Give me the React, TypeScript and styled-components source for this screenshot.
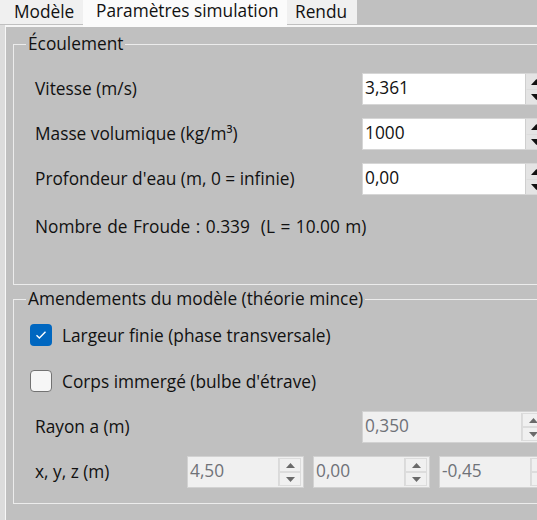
import React from 'react';
import styled, { createGlobalStyle } from 'styled-components';

const GlobalStyle = createGlobalStyle`
    html, body {
        margin: 0;
        padding: 0;
        overflow: hidden;
        background: #c0c0c0;
    }
    body {
        font-family: "Segoe UI", "Open Sans", "Noto Sans", sans-serif;
        font-size: 17.3px;
        color: #111;
    }
`;

const Window = styled.div`
    width: 580px;
    height: 520px;
    background: #c0c0c0;
    display: flex;
    flex-direction: column;
`;

const TabStrip = styled.div`
    display: flex;
    align-items: flex-start;
    height: 25px;
    position: relative;
    z-index: 1;
`;

const Tab = styled.div<{ $active?: boolean; $width: number; $pad: number }>`
    box-sizing: border-box;
    width: ${(p) => p.$width}px;
    height: ${(p) => (p.$active ? 27 : 24)}px;
    padding-left: ${(p) => p.$pad}px;
    line-height: ${(p) => (p.$active ? 21 : 23)}px;
    background: ${(p) => (p.$active ? '#fbfbfb' : '#f0f0f0')};
    white-space: nowrap;
`;

const PageArea = styled.div`
    flex: 1;
    display: flex;
    background: #dcdcdc;
    padding-left: 5px;
`;

const Page = styled.div`
    flex: 1;
    background: #c0c0c0;
    border-top: 2px solid #f7f7f7;
    border-left: 1px solid #f7f7f7;
    padding: 6px 0 0 7px;
    display: flex;
    flex-direction: column;
    gap: 3px;
`;

const GroupBox = styled.fieldset`
    margin: 0;
    padding: 0;
    border: 1px solid #ececec;
    min-width: 0;
`;

const Legend = styled.legend`
    margin-left: 12px;
    padding: 0 2px;
    line-height: 22px;
`;

const GroupBody = styled.div<{ $top: number; $bottom: number }>`
    padding: ${(p) => p.$top}px 0 ${(p) => p.$bottom}px 21px;
    display: flex;
    flex-direction: column;
`;

const FieldRow = styled.div<{ $gap?: number }>`
    display: flex;
    align-items: center;
    height: 32px;
    margin-top: ${(p) => p.$gap ?? 0}px;
`;

const FieldLabel = styled.div<{ $width: number }>`
    width: ${(p) => p.$width}px;
    flex-shrink: 0;
    line-height: 22px;
    margin-top: -1px;
    white-space: nowrap;
`;

const Info = styled.div`
    margin-top: 21px;
    line-height: 22px;
    white-space: nowrap;
    word-spacing: 1px;
`;

const CheckRow = styled.label<{ $gap?: number }>`
    display: flex;
    align-items: center;
    gap: 10px;
    height: 24px;
    margin-left: -5px;
    margin-top: ${(p) => p.$gap ?? 0}px;
    white-space: nowrap;
`;

const CheckBox = styled.span<{ $checked?: boolean }>`
    box-sizing: border-box;
    width: 22px;
    height: 22px;
    border-radius: 4px;
    display: flex;
    align-items: center;
    justify-content: center;
    background: ${(p) => (p.$checked ? '#0067c0' : '#f6f6f6')};
    border: ${(p) => (p.$checked ? 'none' : '1.5px solid #727272')};
`;

const NumBox = styled.div<{ $width: number; $disabled?: boolean }>`
    box-sizing: border-box;
    display: flex;
    width: ${(p) => p.$width}px;
    height: 32px;
    flex-shrink: 0;
    border: 1px solid ${(p) => (p.$disabled ? '#d2d2d2' : '#d6d6d6')};
    background: ${(p) => (p.$disabled ? '#f0f0f0' : '#ffffff')};
`;

const NumText = styled.span<{ $disabled?: boolean }>`
    flex: 1;
    padding-left: 2px;
    line-height: 28px;
    color: ${(p) => (p.$disabled ? '#6f7278' : '#111')};
`;

const Spinner = styled.div<{ $disabled?: boolean }>`
    width: ${(p) => (p.$disabled ? 22 : 20)}px;
    display: flex;
    flex-direction: column;
    margin: ${(p) => (p.$disabled ? '1px 2px 1px 0' : '0 0 0 2px')};
    background: ${(p) => (p.$disabled ? '#f0f0f0' : '#e4e4e4')};
    border-left: 1px solid ${(p) => (p.$disabled ? '#dadada' : '#cfcfcf')};
`;

const SpinButton = styled.div<{ $disabled?: boolean }>`
    flex: 1;
    display: flex;
    align-items: center;
    justify-content: center;
    border: 1px solid ${(p) => (p.$disabled ? '#dcdcdc' : 'transparent')};
    & + & {
        border-top-color: ${(p) => (p.$disabled ? '#dcdcdc' : '#d0d0d0')};
    }
`;

const Arrow = ({ up, disabled }: { up?: boolean; disabled?: boolean }) => {
    const w = disabled ? 9 : 11;
    const h = disabled ? 5 : 6;
    const points = up ? `0,${h} ${w / 2},0 ${w},${h}` : `0,0 ${w / 2},${h} ${w},0`;
    return (
        <svg width={w} height={h} viewBox={`0 0 ${w} ${h}`}>
            <polygon points={points} fill={disabled ? '#6a6a6a' : '#111'} />
        </svg>
    );
};

const Numeric = ({ value, width, disabled }: { value: string; width: number; disabled?: boolean }) => (
    <NumBox $width={width} $disabled={disabled}>
        <NumText $disabled={disabled}>{value}</NumText>
        <Spinner $disabled={disabled}>
            <SpinButton $disabled={disabled}>
                <Arrow up disabled={disabled} />
            </SpinButton>
            <SpinButton $disabled={disabled}>
                <Arrow disabled={disabled} />
            </SpinButton>
        </Spinner>
    </NumBox>
);

const Coords = styled.div`
    display: flex;
    gap: 9px;
`;

const Check = () => (
    <svg width="12" height="10" viewBox="0 0 12 10">
        <path d="M1.5 5.2 L4.4 8 L10.5 1.8" fill="none" stroke="#fff" strokeWidth="1.4" />
    </svg>
);

const App: React.FC = () => {
    return (
        <>
            <GlobalStyle />
            <Window>
                <TabStrip>
                    <Tab $width={83} $pad={14}>Modèle</Tab>
                    <Tab $active $width={204} $pad={13}>Paramètres simulation</Tab>
                    <Tab $width={70} $pad={8}>Rendu</Tab>
                </TabStrip>
                <PageArea>
                    <Page>
                        <GroupBox>
                            <Legend>Écoulement</Legend>
                            <GroupBody $top={18} $bottom={46}>
                                <FieldRow>
                                    <FieldLabel $width={327}>Vitesse (m/s)</FieldLabel>
                                    <Numeric value="3,361" width={185} />
                                </FieldRow>
                                <FieldRow $gap={13}>
                                    <FieldLabel $width={327}>Masse volumique (kg/m³)</FieldLabel>
                                    <Numeric value="1000" width={185} />
                                </FieldRow>
                                <FieldRow $gap={13}>
                                    <FieldLabel $width={327}>Profondeur d'eau (m, 0 = infinie)</FieldLabel>
                                    <Numeric value="0,00" width={185} />
                                </FieldRow>
                                <Info>Nombre de Froude : 0.339&nbsp;&nbsp;(L = 10.00 m)</Info>
                            </GroupBody>
                        </GroupBox>
                        <GroupBox>
                            <Legend>Amendements du modèle (théorie mince)</Legend>
                            <GroupBody $top={13} $bottom={15}>
                                <CheckRow>
                                    <CheckBox $checked>
                                        <Check />
                                    </CheckBox>
                                    Largeur finie (phase transversale)
                                </CheckRow>
                                <CheckRow $gap={22}>
                                    <CheckBox />
                                    Corps immergé (bulbe d'étrave)
                                </CheckRow>
                                <FieldRow $gap={18}>
                                    <FieldLabel $width={327}>Rayon a (m)</FieldLabel>
                                    <Numeric value="0,350" width={185} disabled />
                                </FieldRow>
                                <FieldRow $gap={13}>
                                    <FieldLabel $width={152}>x, y, z (m)</FieldLabel>
                                    <Coords>
                                        <Numeric value="4,50" width={117} disabled />
                                        <Numeric value="0,00" width={117} disabled />
                                        <Numeric value="-0,45" width={117} disabled />
                                    </Coords>
                                </FieldRow>
                            </GroupBody>
                        </GroupBox>
                    </Page>
                </PageArea>
            </Window>
        </>
    );
};

export default App;
